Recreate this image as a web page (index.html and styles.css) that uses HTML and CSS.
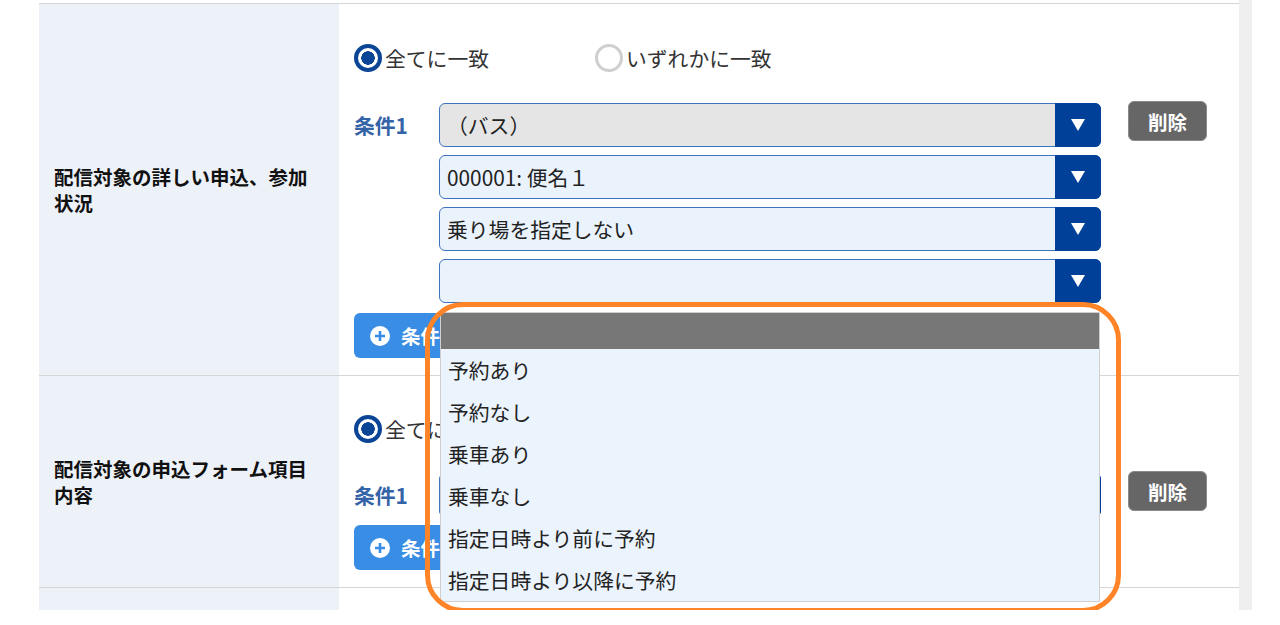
FILE: index.html
```html
<!DOCTYPE html>
<html lang="ja">
<head>
<meta charset="utf-8">
<title>配信対象</title>
<link rel="stylesheet" href="styles.css">
</head>
<body>
<div class="page">
  <div class="table">
    <div class="row row-first">
      <div class="th">配信対象の詳しい申込、参加状況</div>
      <div class="td">
        <div class="radios">
          <label class="radio radio-wide"><span class="dot on"></span>全てに一致</label>
          <label class="radio"><span class="dot"></span>いずれかに一致</label>
        </div>
        <div class="cond">
          <div class="cond-label">条件1</div>
          <div class="selects">
            <div class="select disabled"><span class="val">（バス）</span><span class="arrow"><svg width="14" height="12" viewBox="0 0 14 12"><polygon points="0,0 14,0 7,12" fill="#fff"/></svg></span></div>
            <div class="select"><span class="val">000001: 便名１</span><span class="arrow"><svg width="14" height="12" viewBox="0 0 14 12"><polygon points="0,0 14,0 7,12" fill="#fff"/></svg></span></div>
            <div class="select"><span class="val">乗り場を指定しない</span><span class="arrow"><svg width="14" height="12" viewBox="0 0 14 12"><polygon points="0,0 14,0 7,12" fill="#fff"/></svg></span></div>
            <div class="select open"><span class="val"></span><span class="arrow"><svg width="14" height="12" viewBox="0 0 14 12"><polygon points="0,0 14,0 7,12" fill="#fff"/></svg></span>
              <ul class="dropdown">
                <li class="hl">&nbsp;</li>
                <li>予約あり</li>
                <li>予約なし</li>
                <li>乗車あり</li>
                <li>乗車なし</li>
                <li>指定日時より前に予約</li>
                <li>指定日時より以降に予約</li>
              </ul>
              <div class="callout"></div>
            </div>
          </div>
          <button class="del">削除</button>
        </div>
        <button class="add"><svg width="20" height="20" viewBox="0 0 20 20"><circle cx="10" cy="10" r="10" fill="#fff"/><path d="M10 5v10M5 10h10" stroke="#3a8de4" stroke-width="2.6"/></svg>条件を追加</button>
      </div>
    </div>
    <div class="row row-second">
      <div class="th">配信対象の申込フォーム項目内容</div>
      <div class="td">
        <div class="radios">
          <label class="radio radio-wide"><span class="dot on"></span>全てに一致</label>
          <label class="radio"><span class="dot"></span>いずれかに一致</label>
        </div>
        <div class="cond">
          <div class="cond-label">条件1</div>
          <div class="selects">
            <div class="select"><span class="val"></span><span class="arrow"><svg width="14" height="12" viewBox="0 0 14 12"><polygon points="0,0 14,0 7,12" fill="#fff"/></svg></span></div>
          </div>
          <button class="del">削除</button>
        </div>
        <button class="add"><svg width="20" height="20" viewBox="0 0 20 20"><circle cx="10" cy="10" r="10" fill="#fff"/><path d="M10 5v10M5 10h10" stroke="#3a8de4" stroke-width="2.6"/></svg>条件を追加</button>
      </div>
    </div>
    <div class="row row-last">
      <div class="th"></div>
      <div class="td"></div>
    </div>
  </div>
  <div class="strip"></div>
</div>
</body>
</html>
```
FILE: styles.css
```css
* { box-sizing: border-box; }
html, body { margin: 0; padding: 0; background: #fff; }
body {
  font-family: "Noto Sans CJK JP", "Noto Sans", sans-serif;
  color: #222;
  font-size: 20.8px;
}
.page {
  display: flex;
  margin-left: 39px;
  width: 1213px;
  height: 610px;
  overflow: hidden;
}
.table {
  width: 1200px;
  padding-top: 3px;
}
.strip {
  width: 13px;
  background: #efefef;
}
.row {
  display: grid;
  grid-template-columns: 300px 900px;
  border-top: 1px solid #d6d6d6;
  position: relative;
}
.row-first { z-index: 2; }
.row-last { height: 40px; }
.th {
  background: #edf1f8;
  display: flex;
  align-items: center;
  padding: 0 15px;
  font-weight: bold;
  font-size: 19.5px;
  line-height: 26px;
  color: #111;
}
.td {
  padding: 40px 15px 17px;
}
.row-second .td {
  padding: 39px 15px 17px;
}
.row-second .cond { margin-top: 30px; }
.row-second .add { margin-top: 8px; }
.radios {
  display: flex;
  height: 28px;
  align-items: center;
}
.radio {
  display: inline-flex;
  align-items: center;
  gap: 3px;
  font-size: 20.8px;
  line-height: 28px;
  color: #333;
}
.radio-wide { width: 241px; }
.dot {
  width: 28px;
  height: 28px;
  border-radius: 50%;
  border: 3px solid #cfcfcf;
  background: #fff;
  display: inline-block;
}
.dot.on {
  border: 4px solid #0b4595;
  background: radial-gradient(circle, #0b4595 0 6.5px, #fff 7px);
}
.cond {
  display: flex;
  margin-top: 31px;
  align-items: flex-start;
}
.cond-label {
  width: 85px;
  padding-top: 9px;
  font-weight: bold;
  font-size: 20.8px;
  color: #3563a8;
  line-height: 26px;
}
.selects {
  width: 662px;
  display: flex;
  flex-direction: column;
  gap: 8px;
}
.select {
  position: relative;
  height: 44px;
  border: 1px solid #3e72bd;
  border-radius: 6px;
  background: #eaf2fc;
  display: flex;
  align-items: center;
}
.select.disabled { background: #e5e5e5; }
.val {
  flex: 1;
  padding-left: 7px;
  font-size: 20.8px;
  color: #222;
  white-space: nowrap;
}
.arrow {
  width: 46px;
  align-self: stretch;
  margin: -1px -1px -1px 0;
  background: #004098;
  border-radius: 0 6px 6px 0;
  display: flex;
  align-items: center;
  justify-content: center;
}
.del {
  margin-left: 27px;
  margin-top: -2px;
  width: 79px;
  height: 40px;
  border: 1px solid #8a8a8a;
  border-radius: 6px;
  background: #666;
  color: #fff;
  font-family: inherit;
  font-size: 19.5px;
  font-weight: bold;
  padding: 0;
}
.add {
  margin-top: 10px;
  height: 45px;
  padding: 0 16px;
  border: none;
  border-radius: 6px;
  background: #3a8de4;
  color: #fff;
  font-family: inherit;
  font-size: 19.5px;
  font-weight: bold;
  display: flex;
  align-items: center;
  gap: 11px;
}
.dropdown {
  position: absolute;
  left: 0;
  top: 52px;
  width: 660px;
  margin: 0;
  padding: 0;
  list-style: none;
  background: #ebf3fc;
  border: 1px solid #cfcfcf;
  z-index: 3;
}
.dropdown li {
  height: 42px;
  line-height: 42px;
  padding-left: 7px;
  font-size: 20.8px;
  color: #222;
}
.dropdown li.hl {
  height: 36px;
  background: #777;
}
.callout {
  position: absolute;
  left: -15px;
  top: 42px;
  width: 696px;
  height: 311px;
  border: 5px solid #ff8427;
  border-radius: 38px;
  z-index: 4;
  pointer-events: none;
}
```
